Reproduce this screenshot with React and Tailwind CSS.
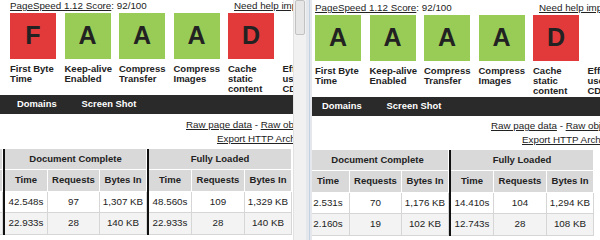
import React from "react";

const LABELS = [
  ["First Byte", "Time"],
  ["Keep-alive", "Enabled"],
  ["Compress", "Transfer"],
  ["Compress", "Images"],
  ["Cache", "static", "content"],
  ["Effective", "use of", "CDN"],
];

function Box({ g }) {
  if (!g) return <div className="w-[46px] h-[46px]" />;
  const red = g === "F" || g === "D";
  return (
    <div
      className={
        "w-[46px] h-[46px] flex items-center justify-center text-[25px] font-bold text-[#222] " +
        (red ? "bg-[#e2393b]" : "bg-[#98cc57]")
      }
    >
      {g}
    </div>
  );
}

function Cell({ children, head, alt, span }) {
  let cls = "flex items-center justify-center border-r border-b ";
  if (head) cls += "bg-[#d9d9d9] border-white font-bold text-[9.5px] ";
  else cls += (alt ? "bg-[#f3f3f3] " : "bg-white ") + "border-[#d6d6d6] ";
  if (span) cls += "col-span-3 ";
  return <div className={cls}>{children}</div>;
}

function Bar() {
  return <div className="bg-[#111]" />;
}

function Table({ rows, ml }) {
  return (
    <div
      className={
        "grid grid-cols-[40px_2px_43px_52px_47px_2px_43px_53px_47px] grid-rows-[21px_22px_21px_22px] w-max text-[9.8px] text-[#222] " +
        ml
      }
    >
      <Cell head />
      <Bar />
      <Cell head span>Document Complete</Cell>
      <Bar />
      <Cell head span>Fully Loaded</Cell>

      <Cell head />
      <Bar />
      <Cell head>Time</Cell>
      <Cell head>Requests</Cell>
      <Cell head>Bytes In</Cell>
      <Bar />
      <Cell head>Time</Cell>
      <Cell head>Requests</Cell>
      <Cell head>Bytes In</Cell>

      {rows.map((r, i) => (
        <React.Fragment key={i}>
          <Cell alt={i === 1} />
          <Bar />
          <Cell alt={i === 1}>{r[0]}</Cell>
          <Cell alt={i === 1}>{r[1]}</Cell>
          <Cell alt={i === 1}>{r[2]}</Cell>
          <Bar />
          <Cell alt={i === 1}>{r[3]}</Cell>
          <Cell alt={i === 1}>{r[4]}</Cell>
          <Cell alt={i === 1}>{r[5]}</Cell>
        </React.Fragment>
      ))}
    </div>
  );
}

function Page({ grades, rows, pad, barPad, linkPad1, linkPad2, top, linkMt, barMt, tableMl }) {
  return (
    <div className={"w-[400px] text-[#222] " + top}>
      <div className={"h-[13px] flex whitespace-nowrap text-[9.8px] leading-[12px] " + pad}>
        <span className="w-[224px] shrink-0">
          <span className="underline">PageSpeed 1.12 Score</span>: 92/100
        </span>
        <span className="underline">Need help improving?</span>
      </div>
      <div className={"flex gap-[8.5px] " + pad}>
        {LABELS.map((l, i) => (
          <div key={i} className="w-[46px] shrink-0 flex flex-col">
            <Box g={grades[i]} />
            <div className="mt-[5px] text-[9.5px] leading-[10px] font-bold whitespace-nowrap">
              {l.map((t, j) => (
                <div key={j}>{t}</div>
              ))}
            </div>
          </div>
        ))}
      </div>
      <div
        className={
          "h-[19px] bg-[#2a2a2a] flex items-center gap-[25px] text-white font-bold text-[9.4px] " +
          barMt +
          " " +
          barPad
        }
      >
        <span>Domains</span>
        <span>Screen Shot</span>
      </div>
      <div className={"text-[9.8px] leading-[14px] whitespace-nowrap " + linkMt}>
        <div className={linkPad1}>
          <span className="underline">Raw page data</span> - <span className="underline">Raw object data</span>
        </div>
        <div className={linkPad2}>
          <span className="underline">Export HTTP Archive (.har)</span>
        </div>
      </div>
      <div className="mt-[3px]">
        <Table rows={rows} ml={tableMl} />
      </div>
    </div>
  );
}

export default function App() {
  return (
    <div className="w-[600px] h-[240px] flex overflow-hidden bg-white font-['Liberation_Sans',Arial,sans-serif]">
      <div className="w-[293px] h-full overflow-hidden shrink-0">
        <Page
          grades={["F", "A", "A", "A", "D", null]}
          rows={[
            ["42.548s", "97", "1,307 KB", "48.560s", "109", "1,329 KB"],
            ["22.933s", "28", "140 KB", "22.933s", "28", "140 KB"],
          ]}
          pad="pl-[10px]"
          barPad="pl-[17px]"
          linkPad1="pl-[186px]"
          linkPad2="pl-[217px]"
          top="pt-0"
          barMt="mt-[1px]"
          linkMt="mt-[4px]"
          tableMl="ml-[-37px]"
        />
      </div>
      <div className="w-[13px] h-full shrink-0 bg-[#f1f1f1] border-l border-[#e2e2e2] flex flex-col items-center">
        <div className="w-[10px] h-[35px] bg-[#e6e6e6] border border-[#c2c2c2] rounded-[2px]" />
      </div>
      <div className="w-[6px] h-full shrink-0 bg-[#e4e8ec] flex justify-center">
        <div className="w-px h-full bg-[#c3d3e3]" />
      </div>
      <div className="flex-1 h-full overflow-hidden">
        <Page
          grades={["A", "A", "A", "A", "D", null]}
          rows={[
            ["2.531s", "70", "1,176 KB", "14.410s", "104", "1,294 KB"],
            ["2.160s", "19", "102 KB", "12.743s", "28", "108 KB"],
          ]}
          pad="pl-[3px]"
          barPad="pl-[10px]"
          linkPad1="pl-[179px]"
          linkPad2="pl-[210px]"
          top="pt-[2px]"
          barMt="mt-[1px]"
          linkMt="mt-[3px]"
          tableMl="ml-[-47px]"
        />
      </div>
    </div>
  );
}
